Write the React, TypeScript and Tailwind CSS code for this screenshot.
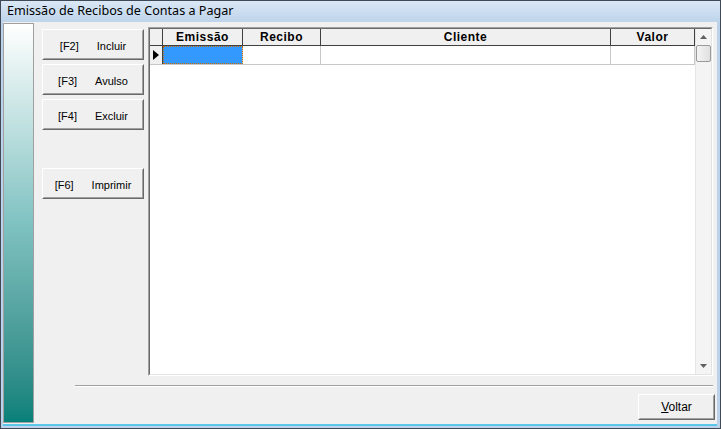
import React from 'react';

const ui = { fontFamily: '"Liberation Sans", Arial, sans-serif' };

function KeyButton({ k, label }: { k: string; label: string }) {
  return (
    <div className="w-[102px] h-[31px] border border-t-white border-l-white border-b-[#696969] border-r-[#696969] bg-[#f0f0f0]">
      <div className="w-full h-full border border-t-[#f0f0f0] border-l-[#f0f0f0] border-b-[#a0a0a0] border-r-[#a0a0a0] flex items-center justify-center gap-[18px] text-[11px] text-black pt-[3px]">
        <span>{k}</span>
        <span>{label}</span>
      </div>
    </div>
  );
}

const columns = [
  { name: 'Emissão', w: 'w-[80px]' },
  { name: 'Recibo', w: 'w-[78px]' },
  { name: 'Cliente', w: 'w-[290px]' },
  { name: 'Valor', w: 'w-[84px]' },
];

function DataGrid() {
  return (
    <div className="w-[565px] h-[349px] border border-t-[#a0a0a0] border-l-[#a0a0a0] border-b-white border-r-white">
      <div className="w-full h-full flex border border-t-[#696969] border-l-[#696969] border-b-[#e3e3e3] border-r-[#e3e3e3] bg-white">
        <div className="flex-1 flex flex-col">
          {/* header */}
          <div className="flex h-[17px] bg-[#f0f0f0] border-b border-[#404040]">
            <div className="w-[13px] border-r border-[#404040]" />
            {columns.map((c) => (
              <div
                key={c.name}
                className={`${c.w} border-r border-[#404040] flex items-center justify-center text-[12px] font-bold tracking-[0.5px] text-black`}
              >
                {c.name}
              </div>
            ))}
          </div>
          {/* first row */}
          <div className="flex h-[19px] border-b border-[#c8c8c8]">
            <div className="w-[13px] border-r border-[#404040] bg-[#f0f0f0] flex items-center justify-center">
              <svg width="6" height="10" viewBox="0 0 6 10">
                <path d="M0 0 L6 5 L0 10 Z" fill="#000" />
              </svg>
            </div>
            <div className="w-[80px] border-r border-[#c8c8c8] bg-[#3399ff] outline-1 outline-dotted outline-[#c46a00] -outline-offset-1" />
            <div className="w-[78px] border-r border-[#c8c8c8]" />
            <div className="w-[290px] border-r border-[#c8c8c8]" />
            <div className="w-[84px] border-r border-[#c8c8c8]" />
          </div>
        </div>
        {/* vertical scrollbar */}
        <div className="w-[17px] bg-[#f4f4f4] border-l border-[#e6e6e6] flex flex-col items-center">
          <div className="h-[16px] flex items-center justify-center">
            <svg width="7" height="4" viewBox="0 0 7 4">
              <path d="M0 4 L3.5 0 L7 4 Z" fill="#606060" />
            </svg>
          </div>
          <div className="w-[15px] h-[17px] rounded-[2px] border border-[#9a9a9a] bg-gradient-to-r from-[#f4f4f4] to-[#e0e0e0]" />
          <div className="flex-1" />
          <div className="h-[16px] flex items-center justify-center">
            <svg width="7" height="4" viewBox="0 0 7 4">
              <path d="M0 0 L3.5 4 L7 0 Z" fill="#606060" />
            </svg>
          </div>
        </div>
      </div>
    </div>
  );
}

export default function App() {
  return (
    <div className="w-[721px] h-[429px] bg-[#bcd2ea] border border-[#3f4a56] flex flex-col" style={ui}>
      {/* Title bar */}
      <div className="h-[21px] bg-gradient-to-b from-[#dae7f5] to-[#bed4eb] flex items-center pl-[6px]">
        <span className="text-[12.6px] text-black" style={{ fontFamily: '"Noto Sans", "Open Sans", sans-serif' }}>
          Emissão de Recibos de Contas a Pagar
        </span>
      </div>

      {/* Body */}
      <div className="flex-1 ml-[2px] mr-[3px] mb-[2px] bg-[#f0f0f0] flex border-b-2 border-[#5cc6ea]">
        {/* Left gradient panel */}
        <div className="mt-[1px] mb-[1px] w-[31px] border border-[#a0a0a0] bg-gradient-to-b from-white via-[#80c2c2] to-[#05807a]" />

        {/* Main column */}
        <div className="ml-[8px] w-[672px] flex flex-col">
          <div className="flex items-start gap-[4px] pt-[5px]">
            <div className="flex flex-col mt-[2px]">
              <div className="flex flex-col gap-[4px]">
                <KeyButton k="[F2]" label="Incluir" />
                <KeyButton k="[F3]" label="Avulso" />
                <KeyButton k="[F4]" label="Excluir" />
              </div>
              <div className="mt-[38px]">
                <KeyButton k="[F6]" label="Imprimir" />
              </div>
            </div>
            <DataGrid />
          </div>

          {/* separator */}
          <div className="ml-[33px] mt-[9px] w-[638px] h-[2px] border-t border-[#a0a0a0] border-b border-b-white" />

          {/* footer */}
          <div className="flex justify-end mt-[7px]">
            <div className="w-[77px] h-[26px] border border-t-white border-l-white border-b-[#696969] border-r-[#696969] -mr-[1px]">
              <div className="w-full h-full border border-t-[#f0f0f0] border-l-[#f0f0f0] border-b-[#a0a0a0] border-r-[#a0a0a0] flex items-center justify-center text-[12px] text-black">
                <span>
                  <span className="underline">V</span>oltar
                </span>
              </div>
            </div>
          </div>
        </div>
      </div>
    </div>
  );
}
